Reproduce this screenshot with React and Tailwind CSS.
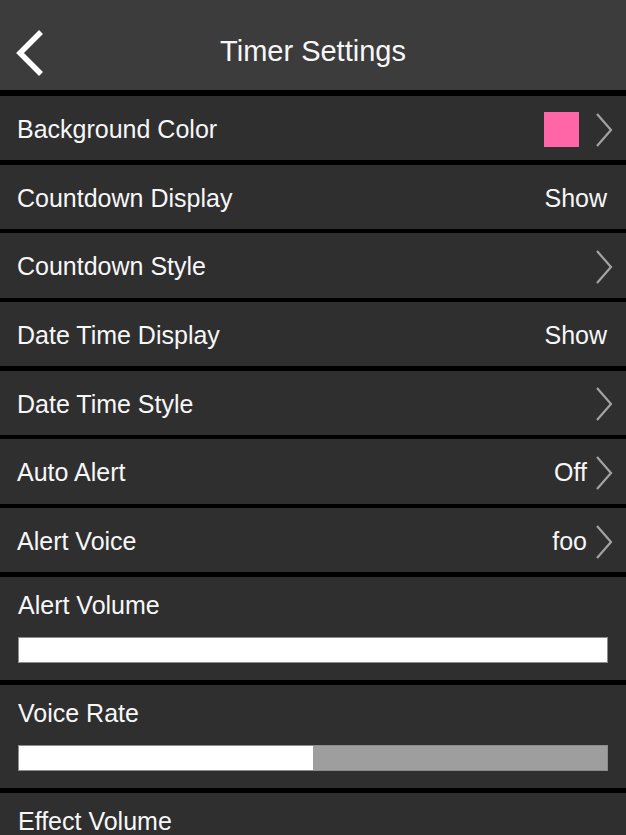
import React from 'react';

const font = { fontFamily: '"Liberation Sans", Arial, sans-serif' };

function Chevron() {
  return (
    <svg width="18" height="34" viewBox="0 0 18 34" className="shrink-0">
      <polyline points="2,1 16,17 2,33" fill="none" stroke="#a3a3a3" strokeWidth="2.2" />
    </svg>
  );
}

function Row({ label, value, swatch, arrow }) {
  return (
    <div className="h-[64.2px] bg-[#2f2f2f] flex items-center pl-[17px] pr-[13px] pt-[3px]">
      <span className="flex-1 text-[25px] text-[#f7f7f7]">{label}</span>
      {swatch && <div className="w-[35px] h-[35px] bg-[#ff66a8] mr-[16px]" />}
      {value && (
        <span className={`text-[25px] text-[#f7f7f7] ${arrow ? 'mr-[8px]' : 'mr-[6px]'}`}>{value}</span>
      )}
      {arrow && <Chevron />}
    </div>
  );
}

function SliderRow({ label, fill }) {
  return (
    <div className="h-[103.5px] bg-[#2f2f2f] px-[18px] pt-[14px]">
      <div className="text-[25px] leading-[28px] text-[#f7f7f7]">{label}</div>
      {fill != null && (
        <div className="mt-[18px] h-[26px] w-[590px] bg-[#9e9e9e] border border-[#8c8c8c] flex">
          <div className="h-full bg-white" style={{ width: `${fill}%` }} />
        </div>
      )}
    </div>
  );
}

export default function App() {
  return (
    <div className="w-[626px] h-[835px] overflow-hidden bg-black flex flex-col" style={font}>
      <div className="h-[90px] shrink-0 bg-[#3c3c3c] flex items-center pt-[16px]">
        <div className="w-[80px] pl-[14px] flex items-center">
          <svg width="32" height="50" viewBox="0 0 32 50">
            <polyline points="27,4 6,25 27,46" fill="none" stroke="#ffffff" strokeWidth="5.5" />
          </svg>
        </div>
        <div className="flex-1 text-center text-[29px] text-[#f7f7f7] -mt-[2px]">Timer Settings</div>
        <div className="w-[80px]" />
      </div>
      <div className="mt-[6px] flex flex-col gap-[4.5px]">
        <Row label="Background Color" swatch arrow />
        <Row label="Countdown Display" value="Show" />
        <Row label="Countdown Style" arrow />
        <Row label="Date Time Display" value="Show" />
        <Row label="Date Time Style" arrow />
        <Row label="Auto Alert" value="Off" arrow />
        <Row label="Alert Voice" value="foo" arrow />
        <SliderRow label="Alert Volume" fill={100} />
        <SliderRow label="Voice Rate" fill={50} />
        <SliderRow label="Effect Volume" fill={100} />
      </div>
    </div>
  );
}
